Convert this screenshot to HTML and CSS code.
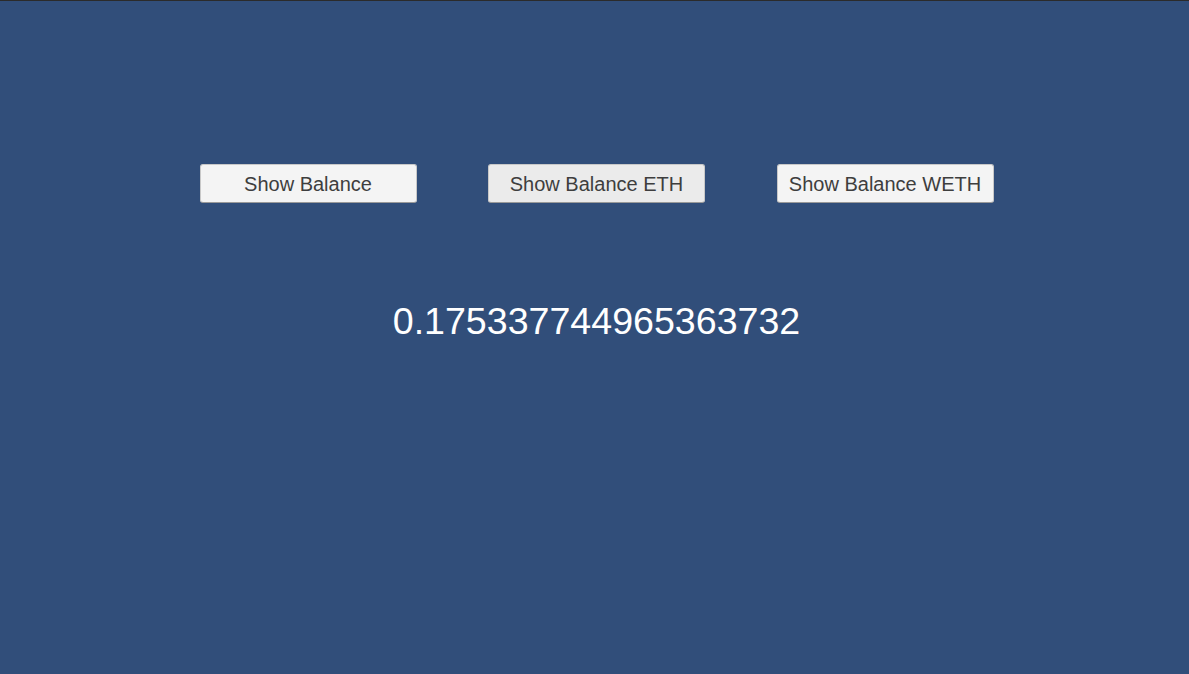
FILE: index.html
```html
<!DOCTYPE html>
<html>
<head>
<meta charset="utf-8">
<link rel="stylesheet" href="styles.css">
</head>
<body>
<div class="topbar"></div>
<main class="screen">
  <div class="buttons">
    <button class="btn">Show Balance</button>
    <button class="btn btn-hover">Show Balance ETH</button>
    <button class="btn">Show Balance WETH</button>
  </div>
  <div class="balance">0.175337744965363732</div>
</main>
</body>
</html>
```
FILE: styles.css
```css
html, body {
  margin: 0;
  padding: 0;
  height: 100%;
}
body {
  background: #314e7a;
  font-family: "Liberation Sans", Arial, sans-serif;
  overflow: hidden;
}
.topbar {
  height: 1px;
  background: #2b2b2b;
}
.screen {
  display: flex;
  flex-direction: column;
  align-items: center;
  padding-left: 4px;
}
.buttons {
  display: flex;
  gap: 71.5px;
  margin-top: 163px;
}
.btn {
  width: 217px;
  height: 39px;
  background: #f4f4f4;
  border: 1px solid #c8c8c8;
  border-bottom-color: #9a9a9a;
  border-radius: 3px;
  font-family: "Liberation Sans", Arial, sans-serif;
  font-size: 20px;
  color: #3e3e3e;
  padding: 0;
  line-height: 38px;
}
.btn-hover {
  background: #ebebeb;
}
.balance {
  margin-top: 97px;
  font-size: 37.6px;
  line-height: 42px;
  color: #ffffff;
}
```
